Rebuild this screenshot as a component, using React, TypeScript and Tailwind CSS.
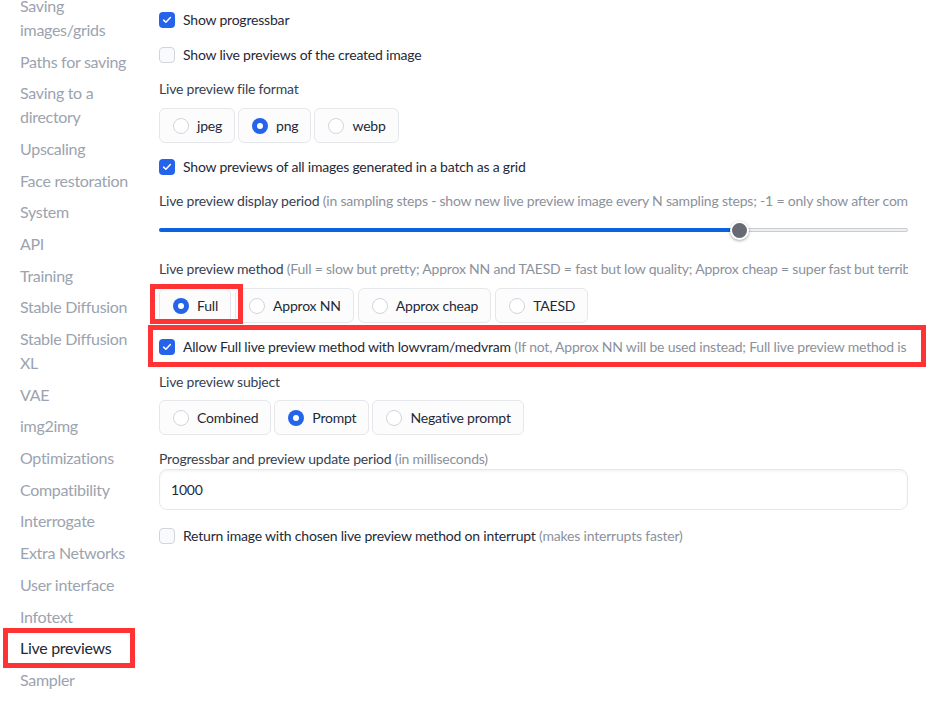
import React from "react";

const font = { fontFamily: "Lato, 'Noto Sans', sans-serif" };

const navItems: string[] = [
	"Saving images/grids",
	"Paths for saving",
	"Saving to a directory",
	"Upscaling",
	"Face restoration",
	"System",
	"API",
	"Training",
	"Stable Diffusion",
	"Stable Diffusion XL",
	"VAE",
	"img2img",
	"Optimizations",
	"Compatibility",
	"Interrogate",
	"Extra Networks",
	"User interface",
	"Infotext",
	"Live previews",
	"Sampler",
];

const Check = ({ on }: { on: boolean }) =>
	on ? (
		<span className="flex h-4 w-4 shrink-0 items-center justify-center rounded-[4px] bg-[#2563eb]">
			<svg viewBox="0 0 16 16" className="h-3 w-3">
				<path d="M3.5 8.2l3 2.8 6-6.2" fill="none" stroke="white" strokeWidth="2" strokeLinecap="round" strokeLinejoin="round" />
			</svg>
		</span>
	) : (
		<span className="h-4 w-4 shrink-0 rounded-[4px] border border-[#d1d5db] bg-[#f9fafb]" />
	);

const CheckRow = ({ on, label, info }: { on: boolean; label: string; info?: string }) => (
	<div className="flex h-5 items-center gap-2 whitespace-nowrap text-sm text-[#1f2937]">
		<Check on={on} />
		<span>
			{label}
			{info && <span className="text-[#8b919b]"> {info}</span>}
		</span>
	</div>
);

const Label = ({ text, info, className }: { text: string; info?: string; className: string }) => (
	<div className={`flex h-5 items-center whitespace-nowrap text-sm text-[#374151] ${className}`}>
		<span>
			{text}
			{info && <span className="text-[#8b919b]"> {info}</span>}
		</span>
	</div>
);

const Radio = ({ label, on }: { label: string; on?: boolean }) => (
	<div className="flex h-[35px] items-center gap-[8px] rounded-md border border-[#e5e7eb] bg-[#fcfcfc] pl-[13px] pr-[12px] text-sm text-[#1f2937]">
		{on ? (
			<span className="flex h-4 w-4 items-center justify-center rounded-full bg-[#2563eb]">
				<span className="h-[6px] w-[6px] rounded-full bg-white" />
			</span>
		) : (
			<span className="h-4 w-4 rounded-full border border-[#d1d5db] bg-white" />
		)}
		<span>{label}</span>
	</div>
);

const App: React.FC = () => {
	return (
		<div className="relative h-[702px] w-[946px] overflow-hidden bg-white tracking-[-0.2px]" style={font}>
			<div className="flex">
				{/* SIDEBAR */}
				<div className="mt-[-10px] w-[159px] shrink-0 pl-[20px] pr-[20px] tracking-[-0.3px]">
					{navItems.map((item) => (
						<div
							key={item}
							className={`py-[3.85px] text-base leading-6 ${
								item === "Live previews" ? "text-[#1f2937]" : "text-[#9ca3af]"
							}`}>
							{item}
						</div>
					))}
				</div>

				{/* SETTINGS */}
				<div className="w-[749px] shrink-0 overflow-hidden pt-[10px]">
					<CheckRow on label="Show progressbar" />
					<div className="mt-[15px]">
						<CheckRow on={false} label="Show live previews of the created image" />
					</div>
					<Label className="mt-[14px]" text="Live preview file format" />
					<div className="mt-[9px] flex gap-[3px]">
						<Radio label="jpeg" />
						<Radio label="png" on />
						<Radio label="webp" />
					</div>
					<div className="mt-[14px]">
						<CheckRow on label="Show previews of all images generated in a batch as a grid" />
					</div>
					<Label
						className="mt-[14px]"
						text="Live preview display period"
						info="(in sampling steps - show new live preview image every N sampling steps; -1 = only show after completion of batch)"
					/>
					{/* SLIDER */}
					<div className="relative mt-[9px] h-5">
						<div className="absolute left-0 right-0 top-[8px] h-[4px] rounded-full border border-[#c9ccd1] bg-[#eeeff1]" />
						<div className="absolute left-0 top-[8px] h-[4px] w-[581px] rounded-full bg-[#0b63e0]" />
						<div className="absolute left-[571px] top-[1px] h-[19px] w-[19px] rounded-full border-2 border-white bg-[#676a73] shadow-[0_1px_3px_rgba(0,0,0,0.35)]" />
					</div>
					<Label
						className="mt-[19px]"
						text="Live preview method"
						info="(Full = slow but pretty; Approx NN and TAESD = fast but low quality; Approx cheap = super fast but terrible otherwise)"
					/>
					<div className="mt-[9px] flex gap-[4px]">
						<Radio label="Full" on />
						<Radio label="Approx NN" />
						<Radio label="Approx cheap" />
						<Radio label="TAESD" />
					</div>
					<div className="mt-[14px]">
						<CheckRow
							on
							label="Allow Full live preview method with lowvram/medvram"
							info="(If not, Approx NN will be used instead; Full live preview method is very detrimental to speed if lowvram/medvram optimizations are enabled)"
						/>
					</div>
					<Label className="mt-[15px]" text="Live preview subject" />
					<div className="mt-[8px] flex gap-[3px]">
						<Radio label="Combined" />
						<Radio label="Prompt" on />
						<Radio label="Negative prompt" />
					</div>
					<Label className="mt-[14px]" text="Progressbar and preview update period" info="(in milliseconds)" />
					<div className="flex h-[41px] items-center rounded-lg border border-[#e5e7eb] bg-white pl-[11px] text-sm text-[#1f2937] shadow-[inset_0_2px_2px_rgba(0,0,0,0.04)]">
						1000
					</div>
					<div className="mt-[16px]">
						<CheckRow
							on={false}
							label="Return image with chosen live preview method on interrupt"
							info="(makes interrupts faster)"
						/>
					</div>
				</div>
			</div>

			{/* ANNOTATION BOXES */}
			<div className="pointer-events-none absolute left-[150px] top-[284px] h-[40px] w-[93px] border-[5px] border-[#ff3333]" />
			<div className="pointer-events-none absolute left-[148px] top-[325px] h-[42px] w-[778px] border-[5px] border-[#ff3333]" />
			<div className="pointer-events-none absolute left-[3px] top-[628px] h-[40px] w-[132px] border-[5px] border-[#ff3333]" />
		</div>
	);
};

export default App;
